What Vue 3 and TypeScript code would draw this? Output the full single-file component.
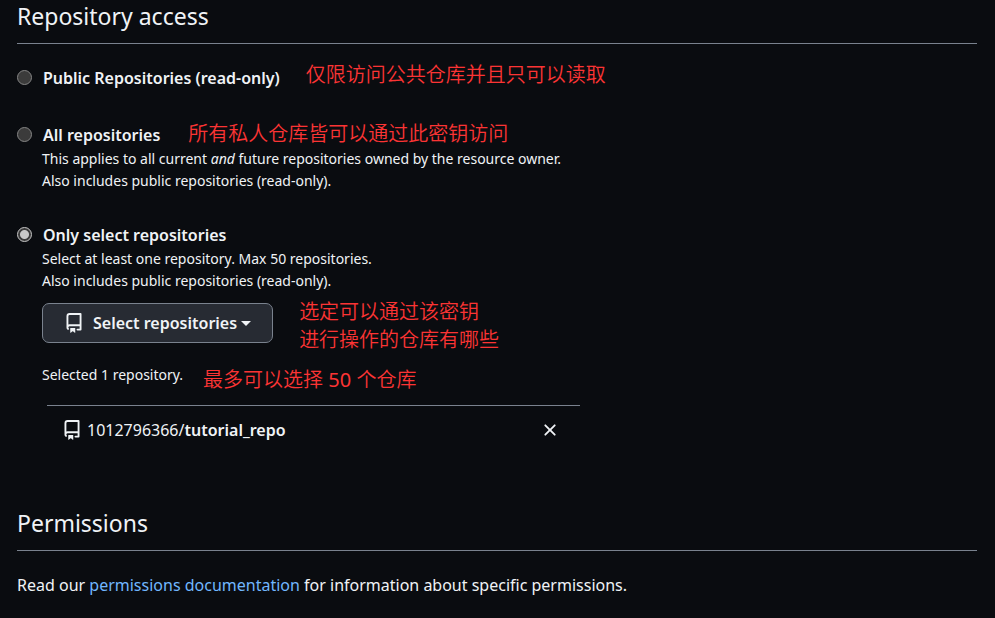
<script setup lang="ts">
import { ref } from 'vue'

type Access = 'public' | 'all' | 'selected'

interface Repo {
  owner: string
  name: string
}

const access = ref<Access>('selected')
const repos = ref<Repo[]>([{ owner: '1012796366', name: 'tutorial_repo' }])

function removeRepo(index: number): void {
  repos.value.splice(index, 1)
}
</script>

<template>
  <main class="page">
    <section class="access">
      <h2 class="title">Repository access</h2>

      <div class="option">
        <div class="option-head">
          <input id="access-public" v-model="access" class="radio" type="radio" name="access" value="public" />
          <label class="option-label" for="access-public">Public Repositories (read-only)</label>
          <span class="note note-high">仅限访问公共仓库并且只可以读取</span>
        </div>
      </div>

      <div class="option">
        <div class="option-head">
          <input id="access-all" v-model="access" class="radio" type="radio" name="access" value="all" />
          <label class="option-label" for="access-all">All repositories</label>
          <span class="note note-far">所有私人仓库皆可以通过此密钥访问</span>
        </div>
        <p class="hint">
          This applies to all current <em>and</em> future repositories owned by the resource owner.<br />
          Also includes public repositories (read-only).
        </p>
      </div>

      <div class="option">
        <div class="option-head">
          <input id="access-selected" v-model="access" class="radio" type="radio" name="access" value="selected" />
          <label class="option-label" for="access-selected">Only select repositories</label>
        </div>
        <p class="hint">
          Select at least one repository. Max 50 repositories.<br />
          Also includes public repositories (read-only).
        </p>
        <div class="picker">
          <button class="select-button" type="button" aria-haspopup="menu">
            <svg class="repo-icon" viewBox="0 0 16 16" aria-hidden="true">
              <path d="M2 2.5A2.5 2.5 0 0 1 4.5 0h8.75a.75.75 0 0 1 .75.75v12.5a.75.75 0 0 1-.75.75h-2.5a.75.75 0 0 1 0-1.5h1.75v-2h-8a1 1 0 0 0-.714 1.7.75.75 0 1 1-1.072 1.05A2.495 2.495 0 0 1 2 11.5Zm10.5-1h-8a1 1 0 0 0-1 1v6.708A2.486 2.486 0 0 1 4.5 9h8ZM5 12.25a.25.25 0 0 1 .25-.25h3.5a.25.25 0 0 1 .25.25v3.25a.25.25 0 0 1-.4.2l-1.45-1.087a.249.249 0 0 0-.3 0L5.4 15.7a.25.25 0 0 1-.4-.2Z" />
            </svg>
            <span>Select repositories</span>
            <span class="caret"></span>
          </button>
          <p class="note">选定可以通过该密钥<br />进行操作的仓库有哪些</p>
        </div>
        <div class="summary">
          <span>Selected {{ repos.length }} repository.</span>
          <span class="note note-low">最多可以选择 <span class="limit">50</span> 个仓库</span>
        </div>
        <ul class="repos">
          <li v-for="(repo, index) in repos" :key="repo.name" class="repo">
            <svg class="repo-icon" viewBox="0 0 16 16" aria-hidden="true">
              <path d="M2 2.5A2.5 2.5 0 0 1 4.5 0h8.75a.75.75 0 0 1 .75.75v12.5a.75.75 0 0 1-.75.75h-2.5a.75.75 0 0 1 0-1.5h1.75v-2h-8a1 1 0 0 0-.714 1.7.75.75 0 1 1-1.072 1.05A2.495 2.495 0 0 1 2 11.5Zm10.5-1h-8a1 1 0 0 0-1 1v6.708A2.486 2.486 0 0 1 4.5 9h8ZM5 12.25a.25.25 0 0 1 .25-.25h3.5a.25.25 0 0 1 .25.25v3.25a.25.25 0 0 1-.4.2l-1.45-1.087a.249.249 0 0 0-.3 0L5.4 15.7a.25.25 0 0 1-.4-.2Z" />
            </svg>
            <span class="repo-name">{{ repo.owner }}/<strong>{{ repo.name }}</strong></span>
            <button class="remove" type="button" :aria-label="`Remove ${repo.name}`" @click="removeRepo(index)">
              <svg class="x-icon" viewBox="0 0 16 16" aria-hidden="true">
                <path d="M3.72 3.72a.75.75 0 0 1 1.06 0L8 6.94l3.22-3.22a.75.75 0 1 1 1.06 1.06L9.06 8l3.22 3.22a.75.75 0 1 1-1.06 1.06L8 9.06l-3.22 3.22a.75.75 0 0 1-1.06-1.06L6.94 8 3.72 4.78a.75.75 0 0 1 0-1.06Z" />
              </svg>
            </button>
          </li>
        </ul>
      </div>
    </section>

    <section>
      <h2 class="title">Permissions</h2>
      <p class="intro">
        Read our <a class="link" href="#permissions">permissions documentation</a> for information about specific permissions.
      </p>
    </section>
  </main>
</template>

<style>
body {
  background: #0a0c10;
}
</style>

<style scoped>
.page {
  padding: 0 18px 0 17px;
  color: #f0f3f6;
  font-family: "Noto Sans", "Noto Sans CJK SC", sans-serif;
  font-size: 16px;
  line-height: 28px;
}

.title {
  margin: 0 0 20px;
  padding-bottom: 11px;
  border-bottom: 1px solid #7a828e;
  font-size: 23px;
  font-weight: 400;
  line-height: 32px;
}

.access {
  margin-bottom: 53px;
}

.option {
  margin-bottom: 29px;
}

.option-head {
  display: flex;
  align-items: center;
  height: 28px;
}

.radio {
  flex: none;
  appearance: none;
  box-sizing: border-box;
  width: 15px;
  height: 15px;
  margin: 0 11px 2px 0;
  border: 1px solid #858585;
  border-radius: 50%;
  background: #3b3b3b;
}

.radio:checked {
  border-color: #c8c8c8;
  background: radial-gradient(circle, #c8c8c8 0 4px, #3b3b3b 5px);
}

.option-label {
  font-weight: 600;
}

.note {
  margin: 0;
  color: #fb3434;
  font-size: 20px;
  font-weight: 350;
}

.limit {
  font-weight: 400;
}

.note-high {
  margin-left: 26px;
  padding-bottom: 6px;
}

.note-far {
  margin-left: 28px;
  padding-bottom: 2px;
}

.note-low {
  margin-left: 20px;
  padding-top: 10px;
}

.hint {
  margin: -1px 0 0 25px;
  font-size: 14px;
  line-height: 22px;
}

.picker {
  display: flex;
  align-items: flex-start;
  gap: 26px;
  margin: 6px 0 0 25px;
}

.select-button {
  display: flex;
  align-items: center;
  box-sizing: border-box;
  height: 40px;
  margin: 5px 0 0;
  padding: 0 21px;
  border: 1px solid #7a828e;
  border-radius: 7px;
  background: #272b33;
  color: inherit;
  font: inherit;
  font-weight: 600;
}

.repo-icon {
  flex: none;
  width: 20px;
  height: 20px;
  fill: currentColor;
}

.select-button .repo-icon {
  margin-right: 9px;
}

.caret {
  margin-left: 4px;
  border: 5px solid transparent;
  border-top-color: currentColor;
  border-bottom: 0;
}

.summary {
  display: flex;
  align-items: center;
  height: 28px;
  margin: 7px 0 16px 25px;
  font-size: 14px;
}

.repos {
  width: 533px;
  max-width: 100%;
  margin: 0 0 0 30px;
  padding: 0;
  list-style: none;
}

.repo {
  display: flex;
  align-items: center;
  padding: 10px 20px 10px 15px;
  border-top: 1px solid #7a828e;
}

.repo-name {
  margin-left: 5px;
}

.repo-name strong {
  font-weight: 600;
}

.remove {
  display: flex;
  margin-left: auto;
  padding: 0;
  border: 0;
  background: none;
  color: inherit;
}

.x-icon {
  width: 20px;
  height: 20px;
  fill: currentColor;
}

.intro {
  margin: 0;
}

.link {
  color: #71b7ff;
  text-decoration: none;
}
</style>
